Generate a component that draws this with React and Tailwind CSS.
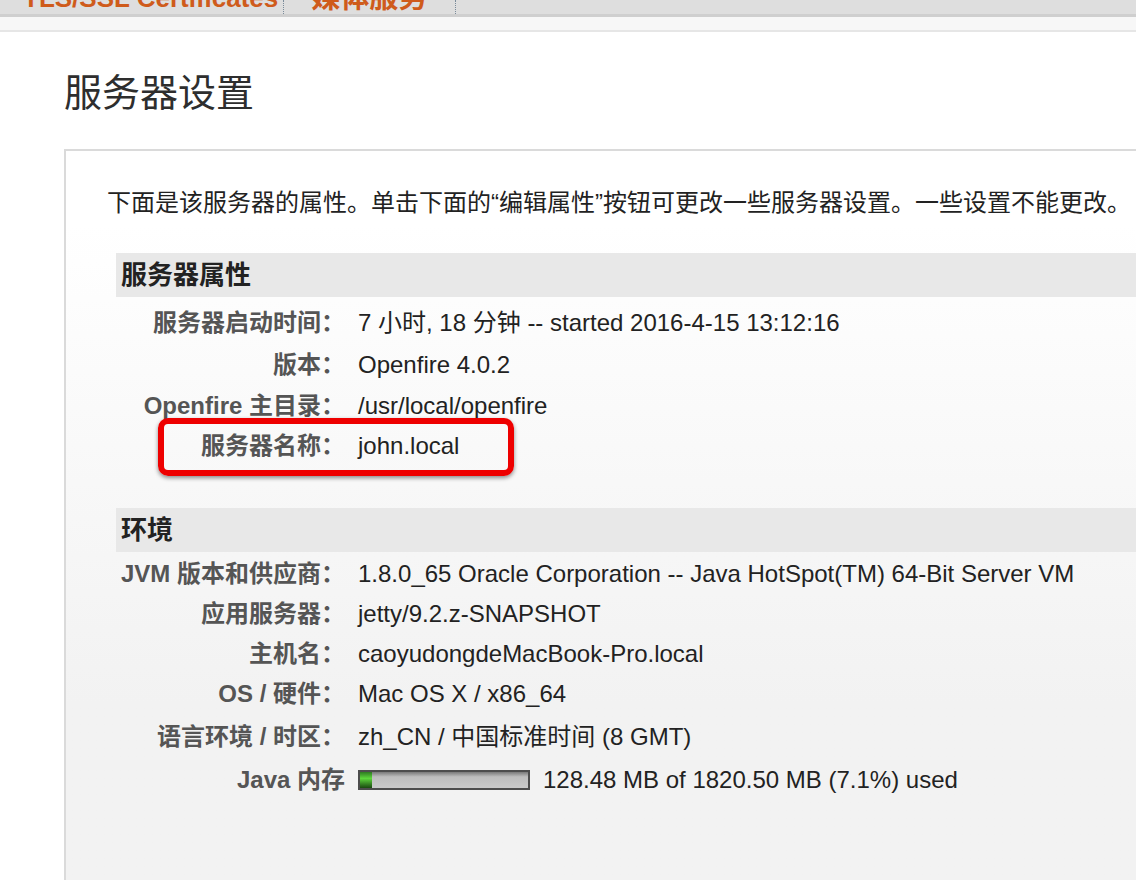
import React from "react";

function Row({ label, children, h = 40, extra = null }) {
  return (
    <div className="relative grid grid-cols-[229px_1fr] items-center" style={{ height: h }}>
      <div className="text-right font-bold text-[#555555] whitespace-nowrap">{label}</div>
      <div className="pl-[13px] text-[#222222] whitespace-nowrap">{children}</div>
      {extra}
    </div>
  );
}

function Header({ children }) {
  return (
    <div className="h-[44px] bg-[#e8e8e8] pl-[5px] text-[26px] font-bold leading-[44px] text-[#222222]">
      {children}
    </div>
  );
}

export default function App() {
  return (
    <div className="h-[880px] w-[1136px] bg-white overflow-hidden [font-family:'Liberation_Sans','Noto_Sans_CJK_SC',sans-serif]">
      {/* top nav */}
      <div className="h-[14px] bg-[#dedede] overflow-hidden flex">
        <div className="pl-[23px] pr-[5px] h-[14px] border-r border-dotted border-[#7a8b9a]">
          <div className="-mt-[15px] text-[26px] leading-[26px] font-bold text-[#cf5b1b] whitespace-nowrap">
            TLS/SSL Certificates
          </div>
        </div>
        <div className="pl-[27px] pr-[28px] h-[14px] border-r border-dotted border-[#7a8b9a]">
          <div className="-mt-[16px] text-[29px] leading-[29px] font-bold text-[#cf5b1b] whitespace-nowrap">
            媒体服务
          </div>
        </div>
      </div>
      <div className="h-[3px] bg-[#cfcfcf]" />
      <div className="h-[13px] bg-[#f7f7f7]" />
      <div className="h-[2px] bg-[#e6e6e6]" />

      <div className="pl-[64px]">
        <h1 className="mt-[38px] text-[38px] leading-[46px] text-[#2e2e2e] font-normal">服务器设置</h1>

        <div className="mt-[33px] border-t-2 border-l-2 border-[#dadada] bg-linear-to-b from-white from-[10%] to-[#f2f2f2] to-[75%] h-[740px] text-[24px]">
          <div className="pt-[34px] pl-[41px] leading-[36px] text-[#222222] whitespace-nowrap">
            下面是该服务器的属性。单击下面的“编辑属性”按钮可更改一些服务器设置。一些设置不能更改。
          </div>

          <div className="pl-[50px]">
            <div className="mt-[32px]">
              <Header>服务器属性</Header>
              <div className="mt-[5px]">
                <Row label="服务器启动时间：" h={42}>7 小时, 18 分钟 -- started 2016-4-15 13:12:16</Row>
                <Row label="版本：" h={42}>Openfire 4.0.2</Row>
                <Row label="Openfire 主目录：">/usr/local/openfire</Row>
                <Row
                  label="服务器名称："
                  extra={
                    <div className="absolute left-[42px] top-[-8px] w-[356px] h-[58px] border-[6px] border-[#ee0000] rounded-[10px] shadow-[0_2px_4px_rgba(0,0,0,0.45)]" />
                  }
                >
                  john.local
                </Row>
              </div>
            </div>

            <div className="mt-[42px]">
              <Header>环境</Header>
              <div className="mt-[2px]">
                <Row label="JVM 版本和供应商：">1.8.0_65 Oracle Corporation -- Java HotSpot(TM) 64-Bit Server VM</Row>
                <Row label="应用服务器：">jetty/9.2.z-SNAPSHOT</Row>
                <Row label="主机名：">caoyudongdeMacBook-Pro.local</Row>
                <Row label="OS / 硬件：">Mac OS X / x86_64</Row>
                <Row label="语言环境 / 时区：" h={46}>zh_CN / 中国标准时间 (8 GMT)</Row>
                <Row label="Java 内存" h={40}>
                  <div className="flex items-center">
                    <div className="w-[172px] h-[20px] border-2 border-[#4d4d4d] bg-linear-to-b from-[#7a7a7a] via-[#bdbdbd] via-[30%] to-[#cacaca] flex">
                      <div className="w-[12px] h-full bg-linear-to-b from-[#2f7a22] via-[#5ed83c] via-[40%] to-[#1a4a10]" />
                    </div>
                    <span className="ml-[13px]">128.48 MB of 1820.50 MB (7.1%) used</span>
                  </div>
                </Row>
              </div>
            </div>
          </div>
        </div>
      </div>
    </div>
  );
}
